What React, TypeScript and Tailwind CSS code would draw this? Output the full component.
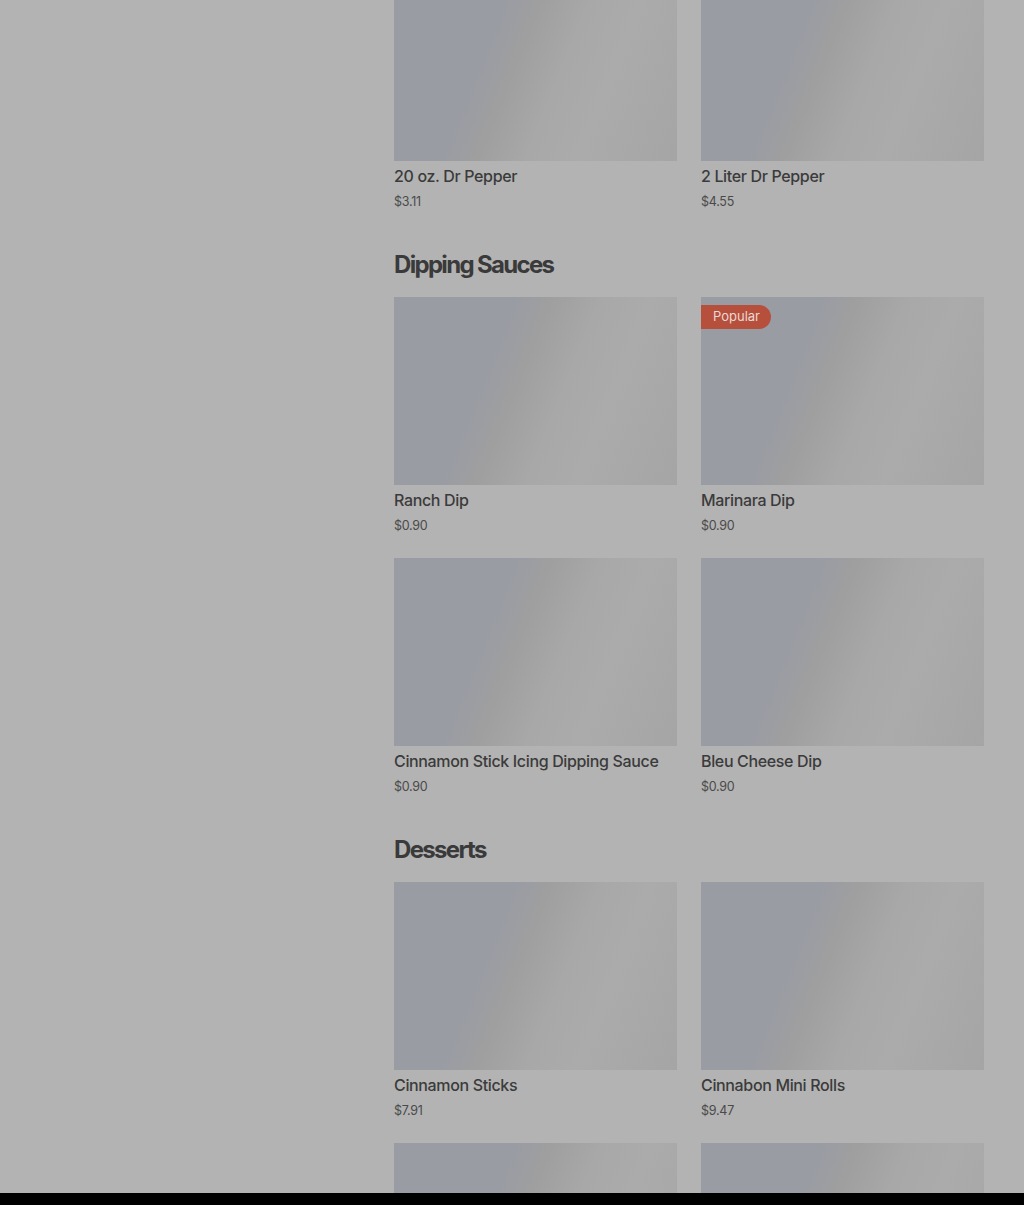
import React from "react";

type Item = { name: string; price: string; popular?: boolean };

const sections: { title?: string; items: Item[] }[] = [
  {
    items: [
      { name: "20 oz. Dr Pepper", price: "$3.11" },
      { name: "2 Liter Dr Pepper", price: "$4.55" },
    ],
  },
  {
    title: "Dipping Sauces",
    items: [
      { name: "Ranch Dip", price: "$0.90" },
      { name: "Marinara Dip", price: "$0.90", popular: true },
      { name: "Cinnamon Stick Icing Dipping Sauce", price: "$0.90" },
      { name: "Bleu Cheese Dip", price: "$0.90" },
    ],
  },
  {
    title: "Desserts",
    items: [
      { name: "Cinnamon Sticks", price: "$7.91" },
      { name: "Cinnabon Mini Rolls", price: "$9.47" },
      { name: "", price: "" },
      { name: "", price: "" },
    ],
  },
];

const MenuCard = ({ item }: { item: Item }) => (
  <div className="flex flex-col">
    {/* image placeholder */}
    <div className="relative h-[188px] shrink-0 bg-[linear-gradient(112deg,#9a9ca4_0%,#9a9ca4_34%,#9f9f9f_44%,#a8a8a8_58%,#ababab_72%,#a5a5a5_100%)]">
      {item.popular && (
        <span className="absolute left-0 top-2 h-6 flex items-center pl-3 pr-[11px] rounded-r-full bg-[#b6503c] text-[13px] text-[#ead8d4]">
          Popular
        </span>
      )}
    </div>
    <div className="mt-[3px] h-6 shrink-0 text-base leading-6 font-medium tracking-[-0.022em] text-[#3b3b3b] whitespace-nowrap">
      {item.name}
    </div>
    <div className="mt-1 h-5 shrink-0 text-[12.5px] leading-5 tracking-[-0.02em] text-[#4a4a4a]">
      {item.price}
    </div>
  </div>
);

export default function App() {
  return (
    <div
      className="h-[1205px] w-full overflow-hidden flex flex-col bg-[#b3b3b3]"
      style={{ fontFamily: "Inter, 'Liberation Sans', sans-serif" }}
    >
      <div className="h-[1193px] overflow-hidden flex">
        {/* Left column (empty sidebar) */}
        <div className="w-[394px] shrink-0" />

        {/* Menu content */}
        <div className="w-[590px] -mt-[27px] flex flex-col gap-[37px]">
          {sections.map((section, i) => (
            <div key={i} className="flex flex-col">
              {section.title && (
                <h2 className="text-2xl leading-8 font-bold tracking-[-0.07em] text-[#3a3a3a] mb-4">
                  {section.title}
                </h2>
              )}
              <div className="grid grid-cols-2 gap-x-6 gap-y-[22px]">
                {section.items.map((item, j) => (
                  <MenuCard key={j} item={item} />
                ))}
              </div>
            </div>
          ))}
        </div>
      </div>
      <div className="h-3 bg-black" />
    </div>
  );
}
